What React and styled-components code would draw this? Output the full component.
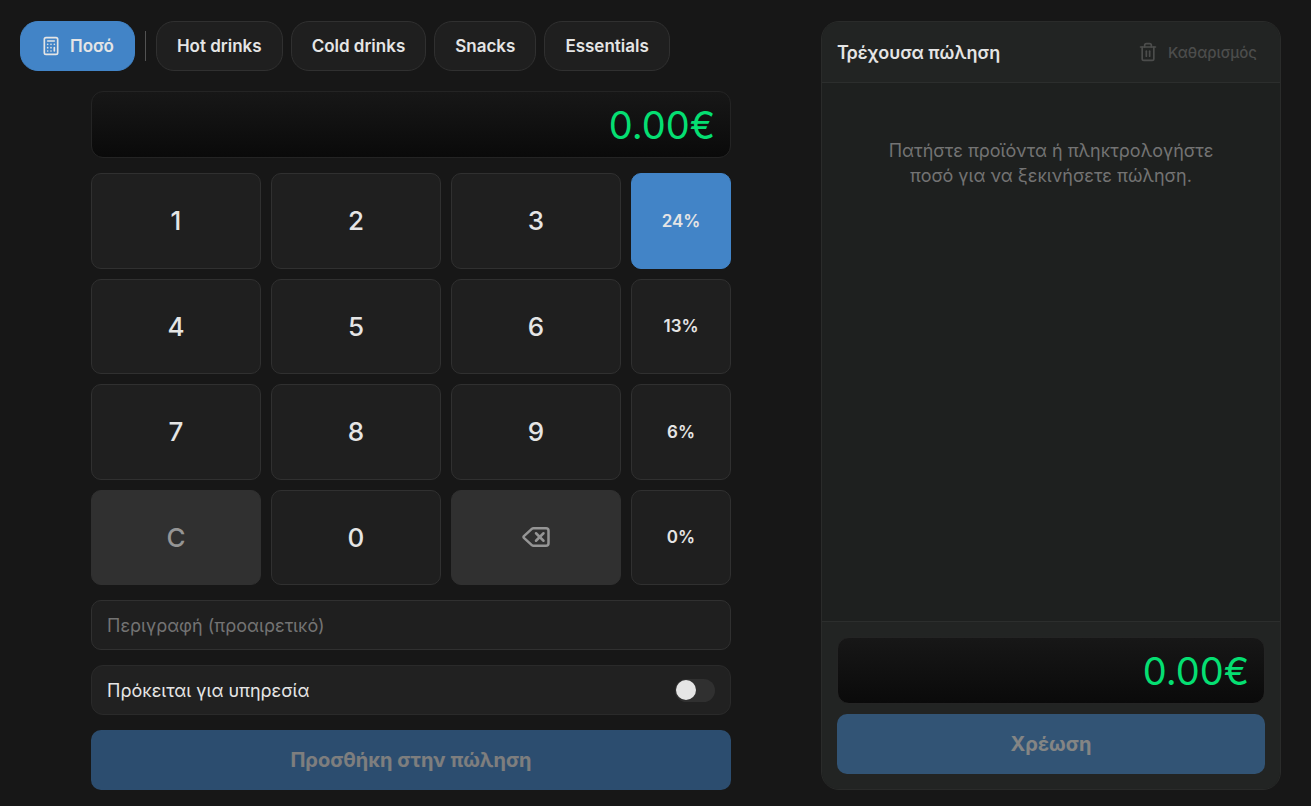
import styled, { createGlobalStyle } from "styled-components";
import { useState } from "react";
import { Calculator, Delete, Trash2 } from "lucide-react";

const CATEGORIES = ["Hot drinks", "Cold drinks", "Snacks", "Essentials"];
const ROWS = [
  { keys: ["1", "2", "3"], vat: 24 },
  { keys: ["4", "5", "6"], vat: 13 },
  { keys: ["7", "8", "9"], vat: 6 },
  { keys: ["C", "0", "back"], vat: 0 },
];

const GlobalStyle = createGlobalStyle`
  * {
    box-sizing: border-box;
  }
  body {
    margin: 0;
    background: #171717;
    color: #e5e5e5;
    font-family: Inter, "Noto Sans", sans-serif;
    font-size: 18px;
  }
  button, input {
    font: inherit;
    color: inherit;
  }
  button {
    cursor: pointer;
  }
  button:disabled {
    cursor: default;
  }
`;

const Page = styled.div`
  display: grid;
  grid-template-columns: minmax(0, 1fr) 460px;
  gap: 19px;
  min-height: 100vh;
  padding: 21px 30px 16px 20px;
`;

const Main = styled.main`
  display: flex;
  flex-flow: column;
  gap: 20px;
`;

const Tabs = styled.nav`
  display: flex;
  align-items: center;
  gap: 8px;
`;

const Tab = styled.button`
  display: flex;
  align-items: center;
  gap: 9px;
  height: 50px;
  padding: 0 20px;
  border: 1px solid ${(props) => (props.$active ? "#4284c7" : "#303030")};
  border-radius: 18px;
  background: ${(props) => (props.$active ? "#4284c7" : "#1f1f1f")};
  font-size: 17px;
  font-weight: 600;
`;

const TabDivider = styled.div`
  width: 1px;
  height: 30px;
  margin: 0 2px;
  background: #525252;
`;

const Register = styled.section`
  display: flex;
  flex-flow: column;
  flex: 1;
  gap: 15px;
  width: 100%;
  max-width: 640px;
  margin: 0 auto;
`;

const Display = styled.output`
  display: flex;
  align-items: center;
  justify-content: flex-end;
  height: 67px;
  padding: 0 15px;
  border: 1px solid #242424;
  border-radius: 12px;
  background: linear-gradient(#171717, #0a0a0a);
  color: #05df72;
  font-size: 38px;
`;

const Keypad = styled.div`
  display: grid;
  grid-template-columns: repeat(3, 1fr) 100px;
  grid-auto-rows: 1fr;
  gap: 10px;
  flex: 1;
`;

const Key = styled.button`
  display: flex;
  align-items: center;
  justify-content: center;
  border: 1px solid #303030;
  border-radius: 10px;
  background: ${(props) => (props.$muted ? "#303030" : "#1f1f1f")};
  color: ${(props) => (props.$muted ? "#959595" : "#e5e5e5")};
  font-size: 26px;
  font-weight: 500;
`;

const VatKey = styled(Key)`
  border-color: ${(props) => (props.$active ? "#4284c7" : "#303030")};
  background: ${(props) => (props.$active ? "#4284c7" : "#1f1f1f")};
  font-size: 17px;
  font-weight: 600;
`;

const Description = styled.input`
  height: 50px;
  padding: 0 15px;
  border: 1px solid #303030;
  border-radius: 10px;
  background: #1f1f1f;
  &::placeholder {
    color: #737373;
    opacity: 1;
  }
`;

const ServiceRow = styled.label`
  display: flex;
  align-items: center;
  justify-content: space-between;
  height: 50px;
  padding: 0 15px;
  border: 1px solid #2a2a2a;
  border-radius: 12px;
  background: #212121;
`;

const Switch = styled.input`
  appearance: none;
  display: flex;
  align-items: center;
  justify-content: ${(props) => (props.checked ? "flex-end" : "flex-start")};
  width: 40px;
  height: 23px;
  margin: 0;
  padding: 0 1px;
  border-radius: 12px;
  background: ${(props) => (props.checked ? "#4284c7" : "#303030")};
  &::before {
    content: "";
    width: 20px;
    height: 20px;
    border-radius: 50%;
    background: #e5e5e5;
  }
`;

const Submit = styled.button`
  height: 60px;
  border: none;
  border-radius: 10px;
  background: #4284c7;
  font-size: 20px;
  font-weight: 700;
  &:disabled {
    opacity: 0.5;
  }
`;

const Sale = styled.aside`
  display: flex;
  flex-flow: column;
  border: 1px solid #2a2b2a;
  border-radius: 18px;
  background: #1e201f;
  overflow: hidden;
`;

const SaleHeader = styled.header`
  display: flex;
  align-items: center;
  justify-content: space-between;
  height: 61px;
  padding: 0 15px;
  border-bottom: 1px solid #2c2e2d;
  background: #222423;
`;

const SaleTitle = styled.h2`
  margin: 0;
  font-size: 18px;
  font-weight: 600;
`;

const ClearButton = styled.button`
  display: flex;
  align-items: center;
  gap: 10px;
  padding: 0 8px;
  border: none;
  background: none;
  color: #959595;
  font-size: 15px;
  font-weight: 500;
  &:disabled {
    color: #4c4d4c;
  }
`;

const SaleBody = styled.div`
  flex: 1;
  padding: 55px 50px;
`;

const Empty = styled.p`
  margin: 0;
  line-height: 25px;
  text-align: center;
  color: #737373;
`;

const SaleLine = styled.div`
  display: flex;
  justify-content: space-between;
  line-height: 30px;
`;

const SaleFooter = styled.footer`
  display: flex;
  flex-flow: column;
  gap: 10px;
  padding: 15px;
  border-top: 1px solid #2c2e2d;
  background: #222423;
`;

const formatPrice = (cents) => (cents / 100).toFixed(2) + "€";

export default function App() {
  const [tab, setTab] = useState("amount");
  const [cents, setCents] = useState(0);
  const [vat, setVat] = useState(24);
  const [description, setDescription] = useState("");
  const [service, setService] = useState(false);
  const [lines, setLines] = useState([]);

  const total = lines.reduce((sum, line) => sum + line.cents, 0);

  const _onKeyClick = (key) => {
    if (key === "C") setCents(0);
    else if (key === "back") setCents(Math.floor(cents / 10));
    else setCents(Math.min(cents * 10 + Number(key), 99999999));
  };

  const _onAddClick = () => {
    setLines([...lines, { cents, vat, description, service }]);
    setCents(0);
    setDescription("");
  };

  return (
    <>
      <GlobalStyle />
      <Page>
        <Main>
          <Tabs>
            <Tab $active={tab === "amount"} onClick={() => setTab("amount")}>
              <Calculator size={20} />
              Ποσό
            </Tab>
            <TabDivider />
            {CATEGORIES.map((name) => (
              <Tab key={name} $active={tab === name} onClick={() => setTab(name)}>
                {name}
              </Tab>
            ))}
          </Tabs>
          <Register>
            <Display>{formatPrice(cents)}</Display>
            <Keypad>
              {ROWS.map((row) => [
                ...row.keys.map((key) => (
                  <Key
                    key={key}
                    $muted={key === "C" || key === "back"}
                    aria-label={key === "back" ? "Backspace" : undefined}
                    onClick={() => _onKeyClick(key)}
                  >
                    {key === "back" ? <Delete size={30} /> : key}
                  </Key>
                )),
                <VatKey key={"vat" + row.vat} $active={vat === row.vat} onClick={() => setVat(row.vat)}>
                  {row.vat}%
                </VatKey>,
              ])}
            </Keypad>
            <Description
              aria-label="Περιγραφή"
              placeholder="Περιγραφή (προαιρετικό)"
              value={description}
              onChange={(e) => setDescription(e.target.value)}
            />
            <ServiceRow>
              Πρόκειται για υπηρεσία
              <Switch type="checkbox" role="switch" checked={service} onChange={(e) => setService(e.target.checked)} />
            </ServiceRow>
            <Submit disabled={cents === 0} onClick={_onAddClick}>
              Προσθήκη στην πώληση
            </Submit>
          </Register>
        </Main>
        <Sale>
          <SaleHeader>
            <SaleTitle>Τρέχουσα πώληση</SaleTitle>
            <ClearButton disabled={lines.length === 0} onClick={() => setLines([])}>
              <Trash2 size={20} />
              Καθαρισμός
            </ClearButton>
          </SaleHeader>
          <SaleBody>
            {lines.length === 0 ? (
              <Empty>Πατήστε προϊόντα ή πληκτρολογήστε ποσό για να ξεκινήσετε πώληση.</Empty>
            ) : (
              lines.map((line, i) => (
                <SaleLine key={i}>
                  <span>{line.description || line.vat + "%"}</span>
                  <span>{formatPrice(line.cents)}</span>
                </SaleLine>
              ))
            )}
          </SaleBody>
          <SaleFooter>
            <Display>{formatPrice(total)}</Display>
            <Submit disabled={total === 0}>Χρέωση</Submit>
          </SaleFooter>
        </Sale>
      </Page>
    </>
  );
}
